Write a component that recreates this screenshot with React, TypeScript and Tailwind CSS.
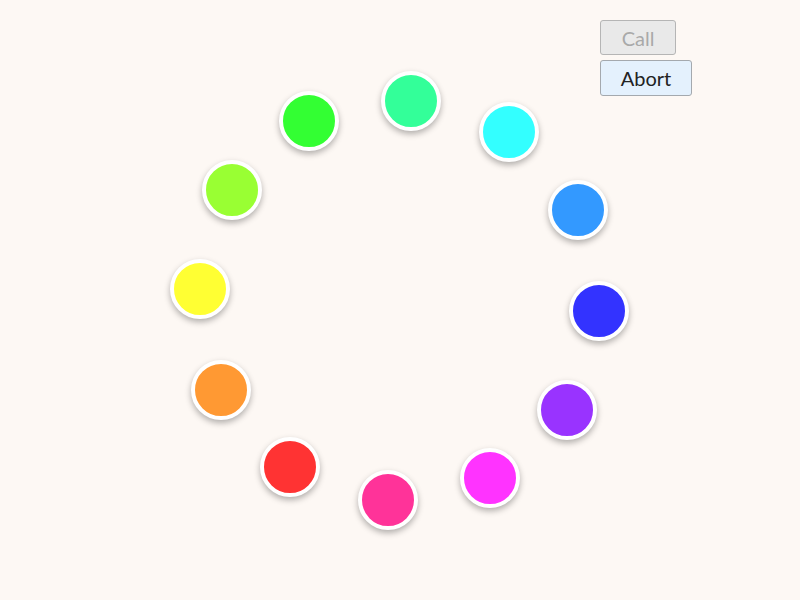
import React from "react";

const dots: { x: number; y: number; c: string }[] = [
  { x: 411, y: 101, c: "#33ff99" },
  { x: 509, y: 132, c: "#33ffff" },
  { x: 578, y: 210, c: "#3399ff" },
  { x: 599, y: 311, c: "#3333ff" },
  { x: 567, y: 410, c: "#9933ff" },
  { x: 490, y: 478, c: "#ff33ff" },
  { x: 388, y: 500, c: "#ff3399" },
  { x: 290, y: 467, c: "#ff3333" },
  { x: 221, y: 390, c: "#ff9933" },
  { x: 200, y: 289, c: "#ffff33" },
  { x: 232, y: 190, c: "#99ff33" },
  { x: 309, y: 121, c: "#33ff33" },
];

export default function App() {
  return (
    <div
      className="relative w-[800px] h-[600px] bg-[#fdf8f4] overflow-hidden"
      style={{ fontFamily: "Lato, 'Noto Sans', sans-serif" }}
    >
      <div className="absolute left-[600px] top-[20px] flex flex-col items-start gap-[5px]">
        <button
          disabled
          className="h-[35px] w-[76px] rounded-[3px] border border-[#b5b5b5] bg-[#e9e9e9] text-[20px] text-[#a9a9a9] leading-none"
        >
          Call
        </button>
        <button className="h-[36px] w-[92px] rounded-[3px] border border-[#a4a9ae] bg-[#e4f1fd] text-[20px] text-[#222] leading-none">
          Abort
        </button>
      </div>
      {dots.map((d, i) => (
        <div
          key={i}
          className="absolute w-[60px] h-[60px] rounded-full border-[4px] border-white shadow-[0_3px_6px_rgba(0,0,0,0.3)]"
          style={{ left: d.x - 30, top: d.y - 30, backgroundColor: d.c }}
        />
      ))}
    </div>
  );
}
